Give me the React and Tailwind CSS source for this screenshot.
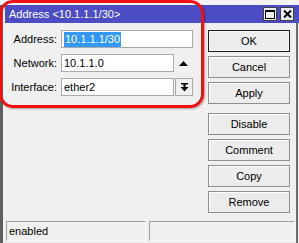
import React from 'react';

function WinButton({ label, isDefault }) {
  return (
    <button
      className={`h-[22px] w-full flex items-center justify-center bg-[#ececec] text-[11px] text-black leading-none border ${
        isDefault
          ? 'border-[#1b1b1b] shadow-[inset_0_0_0_1px_#f8f8f8]'
          : 'border-[#8e8e8e] shadow-[inset_1px_1px_0_#ffffff]'
      }`}
    >
      {label}
    </button>
  );
}

function FieldRow({ label, children }) {
  return (
    <div className="flex items-center h-[18px]">
      <div className="w-[52px] text-right leading-none">{label}</div>
      <div className="ml-[4px] flex items-center">{children}</div>
    </div>
  );
}

function TextBox({ width, children }) {
  return (
    <div
      className="h-[18px] bg-white border border-[#a9a9a9] flex items-center pl-[2px] leading-none"
      style={{ width }}
    >
      {children}
    </div>
  );
}

function App() {
  return (
    <div className="relative w-[299px] h-[243px] overflow-hidden bg-[#f0f0f0] font-['Liberation_Sans',Arial,sans-serif] text-[11px] text-black">
      <div className="h-[5px] bg-[#f4f4f4]" />
      <div className="flex h-[238px]">
        <div className="w-[3px] bg-[#5f5f5f]" />
        <div className="flex-1 flex flex-col pl-[2px]">
          {/* title bar */}
          <div className="h-[18px] flex items-center justify-between bg-[#4c4cc4] pl-[4px] pr-[5px] text-white">
            <span className="leading-none">Address &lt;10.1.1.1/30&gt;</span>
            <div className="flex gap-[3px]">
              <div className="w-[14px] h-[14px] bg-[#ececec] border border-[#404040] flex items-center justify-center">
                <svg width="10" height="9" viewBox="0 0 10 9">
                  <rect x="0.5" y="0.5" width="9" height="8" fill="none" stroke="#000" strokeWidth="1" />
                  <rect x="0" y="0" width="10" height="2" fill="#000" />
                </svg>
              </div>
              <div className="w-[14px] h-[14px] bg-[#ececec] border border-[#404040] flex items-center justify-center">
                <svg width="9" height="8" viewBox="0 0 9 8">
                  <path d="M1 0.5 L8 7.5 M8 0.5 L1 7.5" stroke="#000" strokeWidth="2" />
                </svg>
              </div>
            </div>
          </div>

          {/* body */}
          <div className="flex-1 flex flex-col border-r-2 border-[#6a6a6a] mr-[1px]">
            <div className="flex pt-[7px]">
              <div className="w-[188px] flex flex-col gap-[6px]">
                <FieldRow label="Address:">
                  <TextBox width={132}>
                    <span className="bg-[#3399ff] text-white px-[1px] py-[2px]">10.1.1.1/30</span>
                  </TextBox>
                </FieldRow>
                <FieldRow label="Network:">
                  <TextBox width={113}>10.1.1.0</TextBox>
                  <div className="w-[19px] flex justify-center">
                    <svg width="9" height="5" viewBox="0 0 9 5">
                      <path d="M0 5 L4.5 0 L9 5 Z" fill="#000" />
                    </svg>
                  </div>
                </FieldRow>
                <FieldRow label="Interface:">
                  <TextBox width={113}>ether2</TextBox>
                  <div className="ml-[1px] w-[18px] h-[18px] border border-[#a9a9a9] bg-[#f0f0f0] flex items-center justify-center">
                    <svg width="9" height="9" viewBox="0 0 9 9">
                      <rect x="1" y="0" width="7" height="1.5" fill="#000" />
                      <rect x="3.5" y="1" width="2" height="4" fill="#000" />
                      <path d="M0.5 4 L8.5 4 L4.5 8.5 Z" fill="#000" />
                    </svg>
                  </div>
                </FieldRow>
              </div>

              <div className="ml-[15px] w-[82px] flex flex-col">
                <div className="flex flex-col gap-[4px]">
                  <WinButton label="OK" isDefault />
                  <WinButton label="Cancel" />
                  <WinButton label="Apply" />
                </div>
                <div className="mt-[9px] flex flex-col gap-[4px]">
                  <WinButton label="Disable" />
                  <WinButton label="Comment" />
                  <WinButton label="Copy" />
                  <WinButton label="Remove" />
                </div>
              </div>
            </div>

            {/* status bar */}
            <div className="mt-auto mb-[2px] flex gap-[3px] pl-[1px]">
              <div className="w-[140px] h-[20px] border border-t-[#a0a0a0] border-l-[#a0a0a0] border-b-[#fafafa] border-r-[#fafafa] flex items-center pl-[2px] leading-none">
                enabled
              </div>
              <div className="w-[146px] h-[20px] border border-t-[#a0a0a0] border-l-[#a0a0a0] border-b-[#fafafa] border-r-[#fafafa]" />
            </div>
          </div>
        </div>
      </div>

      {/* annotation */}
      <div className="absolute left-[-1px] top-[0px] w-[205px] h-[108px] border-[3px] border-[#ee1111] rounded-[14px] shadow-[1px_1px_2px_rgba(0,0,0,0.35)] pointer-events-none" />
    </div>
  );
}

export default App;
